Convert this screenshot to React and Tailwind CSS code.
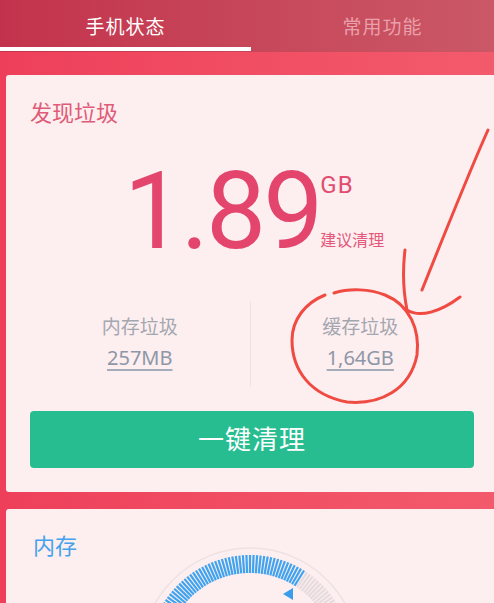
import React from "react";

const CJK = "font-['Noto_Sans','Noto_Sans_CJK_SC',sans-serif]";

function Gauge() {
  const cx = 120;
  const cy = 113;
  const ticks = [];
  for (let a = -150; a <= 150; a += 2) {
    const rad = (a * Math.PI) / 180;
    const r1 = 84;
    const r2 = 102;
    const x1 = cx + r1 * Math.sin(rad);
    const y1 = cy - r1 * Math.cos(rad);
    const x2 = cx + r2 * Math.sin(rad);
    const y2 = cy - r2 * Math.cos(rad);
    ticks.push(
      <line
        key={a}
        x1={x1}
        y1={y1}
        x2={x2}
        y2={y2}
        stroke={a <= 33 ? "#3fa3f0" : "#e6dcde"}
        strokeWidth="2.2"
      />
    );
  }
  return (
    <svg width="240" height="70" viewBox="0 0 240 70" className="block">
      <circle cx={cx} cy={cy} r="109" fill="none" stroke="#ece2e4" strokeWidth="1.5" />
      {ticks}
      <polygon points="153,50 163,44 163,56" fill="#3a9cec" />
    </svg>
  );
}

function Annotation() {
  return (
    <svg
      className="absolute left-0 top-0 pointer-events-none"
      width="494"
      height="603"
      viewBox="0 0 494 603"
    >
      <g fill="none" stroke="#f04b42" strokeWidth="3" strokeLinecap="round" strokeLinejoin="round">
        <path d="M325,295 C305,303 292,320 292,340 C292,370 310,395 347,402 C380,405 410,390 417,355 C420,330 410,305 385,295 C370,289 350,288 334,293" />
        <path d="M488,130 C470,170 452,215 422,290" />
        <path d="M405,250 C402,275 404,295 407,310 C420,318 440,312 460,297" />
      </g>
    </svg>
  );
}

export default function App() {
  return (
    <div className={`relative w-[494px] h-[603px] overflow-hidden bg-gradient-to-r from-[#ee3f5a] to-[#f35a6c] ${CJK}`}>
      {/* header tabs */}
      <div className="h-[52px] flex bg-gradient-to-r from-[#c3324c] to-[#ca5866]">
        <div className="w-[251px] flex flex-col">
          <div className="flex-1 flex items-center justify-center text-[19px] text-white tracking-[1px] pt-[8px]">
            手机状态
          </div>
          <div className="h-[4px] bg-white mb-[1px]" />
        </div>
        <div className="flex-1 flex items-center justify-center pl-[20px] pt-[3px] text-[19px] text-[#e9a0ab] tracking-[1px]">
          常用功能
        </div>
      </div>

      <div className="pl-[6px] pt-[23px]">
        {/* card 1 */}
        <div className="bg-[#fdeeef] h-[417px] rounded-tl-[3px] rounded-bl-[3px] px-[24px] flex flex-col">
          <div className="mt-[24px] text-[22px] leading-[26px] text-[#e05b78]">发现垃圾</div>

          <div className="mt-[42px] flex justify-center pl-[8px]">
            <div className="flex items-start">
              <div className="font-['Roboto',sans-serif] text-[107px] leading-[90px] text-[#e3456c] tracking-[-3px] h-[90px] overflow-visible">
                1.89
              </div>
              <div className="flex flex-col ml-[0px] h-[90px]">
                <div className="font-['Roboto',sans-serif] text-[24px] leading-[22px] tracking-[1px] text-[#e04d70] mt-[7px]">GB</div>
                <div className="mt-auto text-[16px] leading-[18px] text-[#e4577a] mb-[8px]">建议清理</div>
              </div>
            </div>
          </div>

          <div className="mt-[44px] flex h-[86px]">
            <div className="flex-1 flex flex-col items-center pt-[14px]">
              <div className="text-[19px] leading-[24px] text-[#a3a7b0]">内存垃圾</div>
              <div className="mt-[7px] text-[20px] leading-[24px] text-[#8d97a8] underline decoration-[#a6adba] underline-offset-[4px]">257MB</div>
            </div>
            <div className="w-px bg-[#f1dfe1]" />
            <div className="flex-1 flex flex-col items-center pt-[14px]">
              <div className="text-[19px] leading-[24px] text-[#a3a7b0]">缓存垃圾</div>
              <div className="mt-[7px] text-[20px] leading-[24px] text-[#8d97a8] underline decoration-[#a6adba] underline-offset-[4px]">1,64GB</div>
            </div>
          </div>

          <div className="mt-[24px] h-[57px] w-[444px] rounded-[4px] bg-[#27bd90] flex items-center justify-center text-white text-[26px] tracking-[1px]">
            一键清理
          </div>
        </div>

        {/* card 2 */}
        <div className="mt-[17px] bg-[#fdeeef] h-[200px] rounded-tl-[3px] px-[27px]">
          <div className="pt-[23px] text-[22px] leading-[26px] text-[#44a3ec]">内存</div>
          <div className="flex justify-center mt-[-14px] pr-[0px]">
            <Gauge />
          </div>
        </div>
      </div>

      <Annotation />
    </div>
  );
}
